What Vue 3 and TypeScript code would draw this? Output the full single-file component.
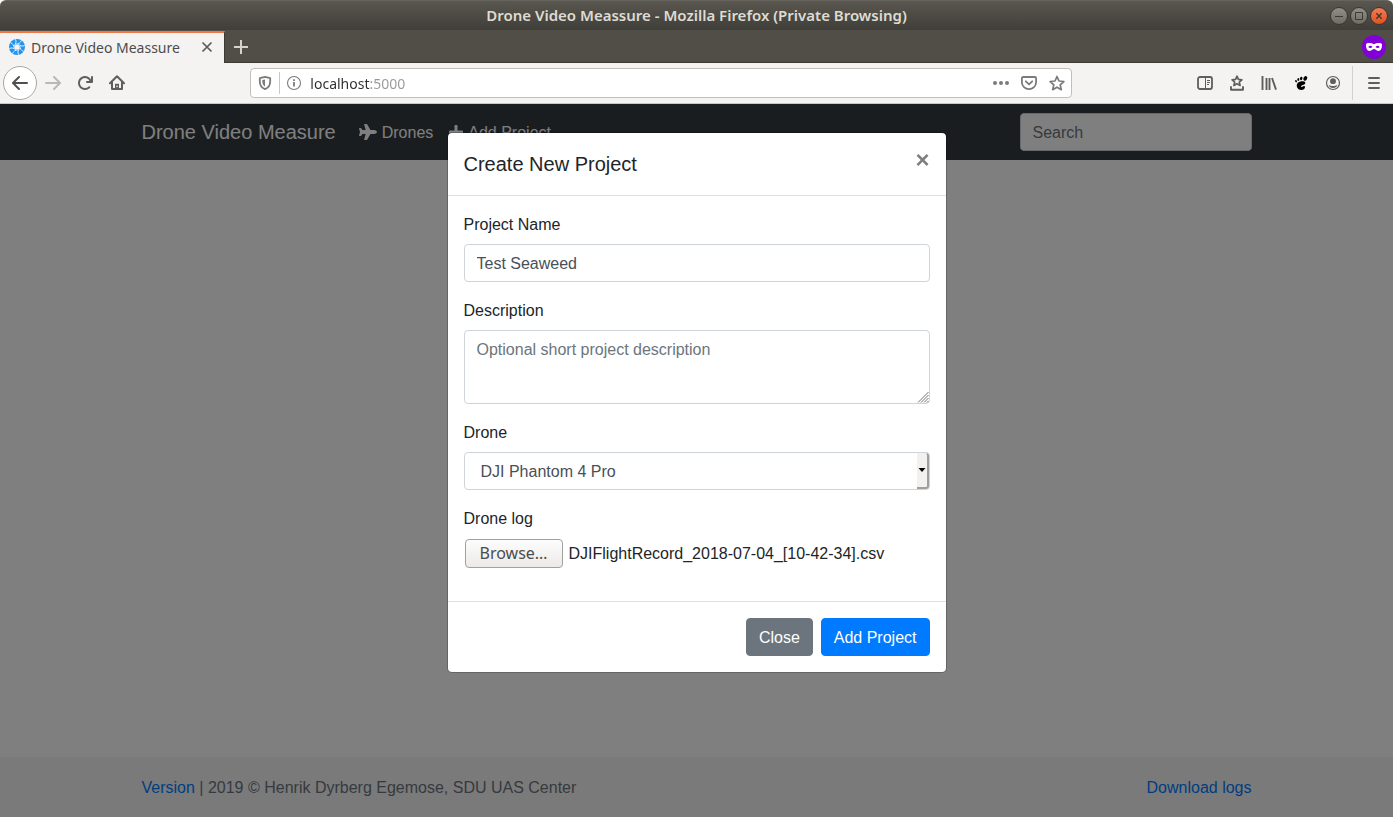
<script setup lang="ts">
import { ref } from 'vue'

const address = ref('localhost:5000')
const search = ref('')
const projectName = ref('Test Seaweed')
const description = ref('')
const drones: string[] = ['DJI Phantom 4 Pro']
const drone = ref(drones[0])
const logName = ref('DJIFlightRecord_2018-07-04_[10-42-34].csv')
const logInput = ref<HTMLInputElement | null>(null)
const bladeAngles: number[] = [0, 45, 90, 135, 180, 225, 270, 315]

function browse(): void {
  logInput.value?.click()
}

function onLogChange(event: Event): void {
  const file = (event.target as HTMLInputElement).files?.[0]
  if (file) logName.value = file.name
}
</script>

<template>
  <div class="window">
    <header class="titlebar">
      <span class="window-title">Drone Video Meassure - Mozilla Firefox (Private Browsing)</span>
      <div class="window-controls">
        <button class="wm" type="button" aria-label="Minimize">
          <svg viewBox="0 0 16 16"><path d="M4 8.500h8" /></svg>
        </button>
        <button class="wm" type="button" aria-label="Maximize">
          <svg viewBox="0 0 16 16"><path d="M4.500 4.500h7v7h-7z" /></svg>
        </button>
        <button class="wm wm-close" type="button" aria-label="Close window">
          <svg viewBox="0 0 16 16"><path d="M5.300 5.300l5.400 5.400M10.700 5.300l-5.400 5.400" /></svg>
        </button>
      </div>
    </header>

    <div class="tabstrip">
      <div class="tab">
        <svg class="favicon" viewBox="0 0 16 16">
          <circle cx="8" cy="8" r="8" fill="#2394ee" />
          <g v-for="a in bladeAngles" :key="a" :transform="`rotate(${a} 8 8)`">
            <path d="M7 5.200C9.500 4.900 11.800 3.800 12.300 1.400" fill="none" stroke="#e9f4fd" stroke-width=".9" />
          </g>
          <circle cx="8" cy="8" r="2.600" fill="#f5f4f2" />
        </svg>
        <span class="tab-title">Drone Video Meassure</span>
        <button class="icon-btn tab-close" type="button" aria-label="Close tab">
          <svg viewBox="0 0 16 16"><path d="M3.500 3.500l9 9M12.500 3.500l-9 9" fill="none" stroke="#5b5b57" stroke-width="1.700" /></svg>
        </button>
      </div>
      <button class="icon-btn new-tab" type="button" aria-label="New tab">
        <svg viewBox="0 0 16 16"><path d="M8 1v14M1 8h14" fill="none" stroke="#d5d3cb" stroke-width="2" /></svg>
      </button>
      <span class="private">
        <svg viewBox="0 0 24 24">
          <circle cx="12" cy="12" r="12" fill="#8000d7" />
          <path d="M12 9.300C10.700 8.200 8.800 8 7 8c-2 0-3 .6-3 1.600 0 3.400.9 6.400 3.600 6.400 2.300 0 2.800-1.900 4.400-1.900s2.100 1.900 4.400 1.900c2.700 0 3.600-3 3.600-6.400 0-1-1-1.600-3-1.600-1.800 0-3.700.2-5 1.300z" fill="#fff" />
          <path d="M6.300 12c.8-1.600 3-1.600 4.200 0-1.200 1.400-3.400 1.400-4.200 0zM17.700 12c-.8-1.600-3-1.600-4.200 0 1.200 1.400 3.400 1.400 4.200 0z" fill="#8000d7" />
        </svg>
      </span>
    </div>

    <nav class="toolbar" aria-label="Browser toolbar">
      <div class="tools tools-left">
        <button class="back" type="button" aria-label="Back">
          <svg viewBox="0 0 16 16"><path d="M15 7H3.414l4.293-4.293a1 1 0 0 0-1.414-1.414l-6 6a1 1 0 0 0 0 1.414l6 6a1 1 0 0 0 1.414-1.414L3.414 9H15a1 1 0 0 0 0-2z" fill="#51504d" /></svg>
        </button>
        <button class="icon-btn" type="button" aria-label="Forward" disabled>
          <svg viewBox="0 0 16 16"><path d="M1 7h11.586L8.293 2.707a1 1 0 0 1 1.414-1.414l6 6a1 1 0 0 1 0 1.414l-6 6a1 1 0 0 1-1.414-1.414L12.586 9H1a1 1 0 0 1 0-2z" fill="#b9b8b5" /></svg>
        </button>
        <button class="icon-btn" type="button" aria-label="Reload">
          <svg viewBox="0 0 16 16"><path d="M15 1a1 1 0 0 0-1 1v2.418A6.995 6.995 0 1 0 8 15a6.954 6.954 0 0 0 4.950-2.050 1 1 0 0 0-1.414-1.414A5.019 5.019 0 1 1 12.549 6H10a1 1 0 0 0 0 2h5a1 1 0 0 0 1-1V2a1 1 0 0 0-1-1z" fill="#5f5e5b" /></svg>
        </button>
        <button class="icon-btn" type="button" aria-label="Home">
          <svg viewBox="0 0 16 16">
            <path d="M1 8.200L8 1.300l7 6.900M3 7.500V14h10V7.500" fill="none" stroke="#5f5e5b" stroke-width="2" stroke-linecap="round" stroke-linejoin="round" />
            <path d="M6 14V8.800h4V14z" fill="#5f5e5b" />
            <circle cx="8" cy="11.400" r=".8" fill="#f3f2f1" />
          </svg>
        </button>
      </div>

      <div class="urlbar">
        <svg class="shield" viewBox="0 0 16 16">
          <path d="M8 1.900l5.200 1.300v3.300c0 3.400-2 6.300-5.200 7.600-3.200-1.300-5.200-4.200-5.200-7.600V3.200z" fill="none" stroke="#7b7b79" stroke-width="1.800" stroke-linejoin="round" />
          <path d="M8 4.400v7.200C6.300 10.500 5.300 8.700 5.300 6.500V5z" fill="#7b7b79" />
        </svg>
        <span class="url-divider"></span>
        <svg class="info" viewBox="0 0 16 16">
          <circle cx="8" cy="8" r="6.500" fill="none" stroke="#7b7b79" stroke-width="1.100" />
          <path d="M7.100 7h1.800v4.500H7.100zM7.100 4.300h1.800v1.700H7.100z" fill="#7b7b79" />
        </svg>
        <input v-model="address" class="address" type="text" aria-label="Address" />
        <div class="url-actions">
          <button class="icon-btn" type="button" aria-label="Page actions">
            <svg viewBox="0 0 16 16" fill="#7b7b79"><circle cx="2" cy="8" r="2" /><circle cx="8" cy="8" r="2" /><circle cx="14" cy="8" r="2" /></svg>
          </button>
          <button class="icon-btn" type="button" aria-label="Save to Pocket">
            <svg viewBox="0 0 16 16" fill="none" stroke="#7b7b79" stroke-width="1.800" stroke-linecap="round" stroke-linejoin="round"><path d="M2.200 2h11.600q1.300 0 1.300 1.300V7.200a7.100 6.900 0 0 1-14.200 0V3.300Q.9 2 2.200 2z" /><path d="M4.800 6.300L8 9.300l3.200-3" /></svg>
          </button>
          <button class="icon-btn" type="button" aria-label="Bookmark">
            <svg viewBox="0 0 16 16"><path d="M8 1.500l2 4.500 4.900.5-3.700 3.300 1.100 4.900L8 12.200l-4.300 2.500 1.100-4.900L1.100 6.500 6 6z" fill="none" stroke="#7b7b79" stroke-width="1.700" stroke-linejoin="round" /></svg>
          </button>
        </div>
      </div>

      <div class="tools tools-right">
        <button class="icon-btn" type="button" aria-label="Sidebar">
          <svg viewBox="0 0 16 16" fill="none" stroke="#5f5e5b"><rect x="1" y="2" width="14" height="12" rx="2" stroke-width="1.800" /><path d="M8.500 2v12" stroke-width="1" /><path d="M10 5.500h3M10 7.500h3M10 9.500h2" stroke-width="1" /></svg>
        </button>
        <button class="icon-btn" type="button" aria-label="Bookmarks">
          <svg viewBox="0 0 16 16" fill="none" stroke="#5f5e5b"><path d="M8 1.200l1.400 3.200 3.500.4-2.600 2.300.8 3.400L8 8.800l-3.100 1.700.8-3.400-2.600-2.300 3.500-.4z" stroke-width="1.700" stroke-linejoin="round" /><path d="M2 12v2.800h12V12" stroke-width="1.900" stroke-linecap="round" stroke-linejoin="round" /></svg>
        </button>
        <button class="icon-btn" type="button" aria-label="Library">
          <svg viewBox="0 0 16 16" fill="none" stroke="#5f5e5b" stroke-width="1.900"><path d="M1.500 1v14M5.500 3v12M8.500 3v12M11 3l4 11.600" /></svg>
        </button>
        <button class="icon-btn" type="button" aria-label="GNOME Shell integration">
          <svg viewBox="0 0 16 16" fill="#000">
            <ellipse cx="12.300" cy="3.400" rx="1.800" ry="2.500" transform="rotate(28 12.300 3.400)" />
            <ellipse cx="8.200" cy="3.500" rx="1.200" ry="1.700" transform="rotate(12 8.200 3.500)" />
            <ellipse cx="5.300" cy="4.500" rx="1" ry="1.400" transform="rotate(-12 5.300 4.500)" />
            <ellipse cx="3" cy="6.200" rx=".9" ry="1.200" transform="rotate(-28 3 6.200)" />
            <path d="M8.600 6.200c-3.100.2-5.200 2.400-4.800 5 .3 2.200 2.100 3.800 4.600 3.800 2 0 3.600-1.100 3.600-2.700 0-1.200-1-1.500-1.800-1-.7.500-1.200 1-1.800.7-.9-.5 0-1.500 1.300-1.900 1.500-.5 2.800-1.100 2.600-2.400-.2-1.200-1.800-1.600-3.700-1.500z" />
          </svg>
        </button>
        <button class="icon-btn" type="button" aria-label="Account">
          <svg viewBox="0 0 16 16"><circle cx="8" cy="8" r="6.500" fill="none" stroke="#5f5e5b" stroke-width="1.200" /><circle cx="8" cy="6.200" r="2.900" fill="#5f5e5b" /><path d="M3.700 9.700c.9.900 2.500 1.200 4.300 1.200s3.400-.3 4.300-1.200C11.800 11.900 10.100 13 8 13s-3.800-1.100-4.300-3.300z" fill="#5f5e5b" /></svg>
        </button>
        <span class="tool-divider"></span>
        <button class="icon-btn" type="button" aria-label="Menu">
          <svg viewBox="0 0 16 16"><path d="M3 3h10M3 8h10M3 13h10" fill="none" stroke="#5f5e5b" stroke-width="1.900" stroke-linecap="round" /></svg>
        </button>
      </div>
    </nav>

    <div class="viewport">
      <div class="page">
        <nav class="navbar" aria-label="Site">
          <div class="container">
            <a class="brand" href="#">Drone Video Measure</a>
            <a class="nav-link" href="#">
              <svg class="plane" viewBox="0 0 576 512"><path d="M480 192H365.710L260.610 8.060A16.014 16.014 0 0 0 246.710 0h-65.500c-10.630 0-18.300 10.170-15.380 20.390L214.860 192H112l-43.200-57.600c-3.020-4.030-7.770-6.400-12.800-6.400H16.010C5.600 128-2.040 137.780.490 147.880L32 256 .490 364.120C-2.040 374.220 5.600 384 16.010 384H56c5.040 0 9.780-2.370 12.800-6.400L112 320h102.860l-49.030 171.600c-2.920 10.220 4.750 20.400 15.380 20.400h65.500c5.740 0 11.040-3.080 13.890-8.060L365.710 320H480c35.350 0 96-28.650 96-64s-60.650-64-96-64z" fill="currentColor" /></svg>
              <span>Drones</span>
            </a>
            <a class="nav-link" href="#">
              <svg class="plus" viewBox="0 0 448 512"><path d="M416 208H272V64c0-17.670-14.330-32-32-32h-32c-17.670 0-32 14.330-32 32v144H32c-17.670 0-32 14.330-32 32v32c0 17.670 14.330 32 32 32h144v144c0 17.670 14.330 32 32 32h32c17.670 0 32-14.330 32-32V304h144c17.670 0 32-14.330 32-32v-32c0-17.670-14.330-32-32-32z" fill="currentColor" /></svg>
              <span>Add Project</span>
            </a>
            <input v-model="search" class="control search" type="search" placeholder="Search" aria-label="Search" />
          </div>
        </nav>
        <main class="content"></main>
        <footer class="footer">
          <div class="container">
            <span><a href="#">Version</a> | 2019 © Henrik Dyrberg Egemose, SDU UAS Center</span>
            <a class="download" href="#">Download logs</a>
          </div>
        </footer>
      </div>

      <div class="backdrop">
        <form class="modal" role="dialog" aria-labelledby="modal-title" @submit.prevent>
          <div class="modal-header">
            <h5 id="modal-title">Create New Project</h5>
            <button class="dismiss" type="button" aria-label="Close dialog">×</button>
          </div>
          <div class="modal-body">
            <div class="group">
              <label for="name">Project Name</label>
              <input id="name" v-model="projectName" class="control" type="text" />
            </div>
            <div class="group">
              <label for="description">Description</label>
              <div class="field">
                <textarea id="description" v-model="description" class="control" rows="2" placeholder="Optional short project description"></textarea>
                <svg class="grip" viewBox="0 0 12 12"><path d="M1 11.500L11.500 1M4 11.500L11.500 4M7 11.500L11.500 7M10 11.500l1.500-1.500" fill="none" stroke="#75736f" stroke-width="1" /></svg>
              </div>
            </div>
            <div class="group">
              <label for="drone">Drone</label>
              <div class="field">
                <select id="drone" v-model="drone" class="control">
                  <option v-for="d in drones" :key="d" :value="d">{{ d }}</option>
                </select>
                <span class="arrow"><svg viewBox="0 0 8 4"><path d="M.5 0h7L4 4z" fill="#000" /></svg></span>
              </div>
            </div>
            <div class="group">
              <label for="log">Drone log</label>
              <div class="file-row">
                <input id="log" ref="logInput" class="file-input" type="file" accept=".csv" @change="onLogChange" />
                <button class="browse" type="button" @click="browse">Browse…</button>
                <span>{{ logName }}</span>
              </div>
            </div>
          </div>
          <div class="modal-footer">
            <button class="btn btn-secondary" type="button">Close</button>
            <button class="btn btn-primary" type="submit">Add Project</button>
          </div>
        </form>
      </div>
    </div>
  </div>
</template>

<style>
body {
  margin: 0;
  background: #fff;
}
</style>

<style scoped>
* {
  box-sizing: border-box;
}

.window {
  display: flex;
  flex-direction: column;
  min-height: 100vh;
  font-family: "Noto Sans", "Open Sans", sans-serif;
  font-size: 14px;
}

button {
  font: inherit;
  cursor: pointer;
}

svg {
  display: block;
}

/* Window frame */
.titlebar {
  display: grid;
  grid-template-columns: 1fr auto 1fr;
  align-items: center;
  height: 30px;
  padding: 0 5px;
  border-radius: 6px 6px 0 0;
  border-top: 1px solid #66645c;
  background: linear-gradient(#59574f, #3f3e39);
}

.window-title {
  grid-column: 2;
  margin-bottom: 2px;
  color: #dfdbd2;
  font-size: 15px;
  font-weight: 600;
  line-height: 20px;
}

.window-controls {
  display: flex;
  justify-content: flex-end;
  gap: 2px;
}

.wm {
  width: 18px;
  height: 18px;
  padding: 0;
  border: 1px solid #383732;
  border-radius: 50%;
  background: linear-gradient(#918f86, #6d6b63);
}

.wm svg {
  width: 16px;
  height: 16px;
  fill: none;
  stroke: #3b3a35;
  stroke-width: 1;
}

.wm-close {
  background: linear-gradient(#f37b55, #e2511f);
}

.wm-close svg {
  stroke-width: 1.4;
}

.tabstrip {
  display: flex;
  align-items: center;
  height: 33px;
  padding: 1px 7px 0 0;
  background: #504e46;
  border-bottom: 1px solid #3b3a35;
}

.tab {
  display: flex;
  align-items: center;
  gap: 6px;
  width: 225px;
  height: 32px;
  padding: 0 9px 2px;
  margin-bottom: -1px;
  border-top: 2px solid #f07746;
  border-right: 1px solid #3b3a35;
  background: #f4f3f2;
  color: #4c4c4c;
}

.favicon {
  width: 16px;
  height: 16px;
}

.tab-title {
  flex: 1;
  white-space: nowrap;
}

.icon-btn {
  flex: none;
  width: 16px;
  height: 16px;
  padding: 0;
  border: 0;
  background: none;
}

.icon-btn svg {
  width: 16px;
  height: 16px;
}

.new-tab {
  margin-left: 8px;
}

.private {
  width: 24px;
  margin-left: auto;
}

.toolbar {
  display: grid;
  grid-template-columns: 133px 1fr 7fr 1fr 204px;
  align-items: center;
  height: 41px;
  border-bottom: 1px solid #c8c7c5;
  background: #f4f3f2;
}

.tools {
  display: flex;
  align-items: center;
  gap: 16px;
}

.tools-left {
  padding-left: 3px;
}

.tools-right {
  grid-column: 5;
  padding-left: 8px;
}

.back {
  display: grid;
  place-items: center;
  flex: none;
  width: 34px;
  height: 34px;
  margin-right: -8px;
  padding: 0;
  border: 1px solid #a9a8a6;
  border-radius: 50%;
  background: #fff;
}

.back svg {
  width: 16px;
  height: 16px;
}

.tool-divider {
  width: 1px;
  height: 34px;
  margin: 0 -3px 0 -5px;
  background: #d2d1cf;
}

.urlbar {
  display: flex;
  align-items: center;
  grid-column: 3;
  height: 30px;
  padding: 0 6px;
  border: 1px solid #c1bfbc;
  border-radius: 4px;
  background: #fff;
}

.shield,
.info {
  flex: none;
  width: 16px;
  height: 16px;
}

.url-divider {
  width: 1px;
  height: 22px;
  margin: 0 6px;
  background: #c8c8c8;
}

.address {
  flex: 1;
  min-width: 0;
  margin-left: 8px;
  padding: 0;
  border: 0;
  outline: 0;
  background: linear-gradient(90deg, #2e2e2e 60px, #989898 60px);
  background-clip: text;
  color: transparent;
  caret-color: #2e2e2e;
  font: inherit;
}

.url-actions {
  display: flex;
  gap: 12px;
}

/* Web page */
.viewport {
  position: relative;
  display: flex;
  flex: 1;
  font-family: "Liberation Sans", Arial, sans-serif;
  font-size: 16px;
  line-height: 24px;
  color: #212529;
}

.page {
  display: flex;
  flex-direction: column;
  flex: 1;
  background: #fff;
}

.container {
  display: flex;
  align-items: center;
  width: 100%;
  max-width: 1140px;
  margin: 0 auto;
  padding: 0 15px;
}

.navbar {
  display: flex;
  height: 56px;
  background: #343a40;
}

.brand {
  margin-right: 15px;
  color: #fff;
  font-size: 20px;
  line-height: 30px;
  text-decoration: none;
  white-space: nowrap;
}

.nav-link {
  display: flex;
  align-items: center;
  gap: 5px;
  padding: 8px;
  color: #fff;
  text-decoration: none;
  white-space: nowrap;
}

.nav-link span {
  padding-top: 2px;
}

.plane {
  width: 18px;
  height: 16px;
}

.plus {
  width: 14px;
  height: 16px;
}

.content {
  flex: 1;
}

.footer {
  display: flex;
  height: 60px;
  padding-top: 2px;
  background: #f5f5f5;
  color: #6c757d;
}

.footer a {
  color: #007bff;
  text-decoration: none;
}

.download {
  margin-left: auto;
}

.control {
  display: block;
  width: 100%;
  height: 38px;
  padding: 7px 12px 5px;
  border: 1px solid #ced4da;
  border-radius: 4px;
  outline: 0;
  background: #fff;
  color: #495057;
  font: inherit;
  appearance: none;
}

.control::placeholder {
  color: #6c757d;
}

.search {
  width: 232px;
  margin-left: auto;
}

.backdrop {
  position: absolute;
  inset: 0;
  padding: 28px 16px;
  background: rgba(0, 0, 0, 0.5);
}

.modal {
  width: 100%;
  max-width: 500px;
  margin: 0 auto;
  border: 1px solid rgba(0, 0, 0, 0.2);
  border-radius: 5px;
  background: #fff;
  background-clip: padding-box;
}

.modal-header {
  display: flex;
  align-items: flex-start;
  justify-content: space-between;
  padding: 16px;
  border-bottom: 1px solid #dee2e6;
}

.modal-header h5 {
  margin: 0;
  font-size: 20px;
  font-weight: 400;
  line-height: 30px;
}

.dismiss {
  margin: -16px -16px -16px auto;
  padding: 15px 16px 17px;
  border: 0;
  background: none;
  color: #000;
  opacity: 0.5;
  font-size: 24px;
  font-weight: 700;
  line-height: 24px;
}

.modal-body {
  padding: 16px;
}

.group {
  margin-bottom: 16px;
}

.group label {
  display: block;
  width: fit-content;
  margin-bottom: 6px;
  line-height: 26px;
}

.field {
  position: relative;
}

textarea.control {
  height: 74px;
  resize: none;
}

.grip {
  position: absolute;
  right: 1px;
  bottom: 1px;
  width: 12px;
  height: 12px;
}

select.control {
  padding-left: 16px;
}

.arrow {
  position: absolute;
  top: 1px;
  right: 1px;
  bottom: 1px;
  display: grid;
  place-items: center;
  width: 12px;
  border-right: 2px solid #a09f9d;
  border-bottom: 2px solid #a09f9d;
  border-radius: 0 3px 3px 0;
  background: #f2f1f0;
  pointer-events: none;
}

.arrow svg {
  width: 8px;
  height: 4px;
}

.file-row {
  display: flex;
  align-items: center;
  gap: 6px;
  height: 31px;
  padding-left: 1px;
}

.file-input {
  position: absolute;
  width: 1px;
  height: 1px;
  opacity: 0;
  pointer-events: none;
}

.browse {
  min-width: 98px;
  height: 29px;
  padding: 0 12px 2px;
  border: 1px solid #a3a19e;
  border-radius: 4px;
  background: linear-gradient(#fdfdfd, #ebeae8);
  color: #4c4c4c;
  font-family: "Noto Sans", "Open Sans", sans-serif;
  font-size: 16px;
  line-height: 24px;
}

.modal-footer {
  display: flex;
  justify-content: flex-end;
  gap: 8px;
  padding: 16px;
  border-top: 1px solid #dee2e6;
}

.btn {
  padding: 7px 12px 5px;
  border: 1px solid transparent;
  border-radius: 4px;
  color: #fff;
  line-height: 24px;
}

.btn-secondary {
  border-color: #6c757d;
  background: #6c757d;
}

.btn-primary {
  border-color: #007bff;
  background: #007bff;
}
</style>
